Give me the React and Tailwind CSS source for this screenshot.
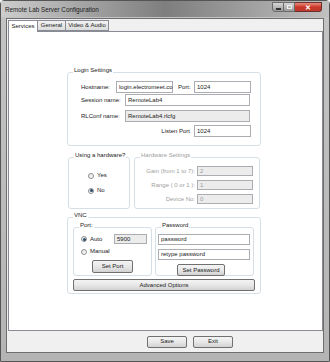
import React from 'react';

const FONT = { fontFamily: '"Liberation Sans", Arial, sans-serif' };

function Input({ value, w, gray, disabled, h = 'h-[11px]' }) {
    return (
        <div className={`${w} ${h} border border-[#abadb3] ${gray ? 'bg-[#ececec]' : 'bg-white'} flex items-center pl-[2px] ${disabled ? 'text-[#9a9a9a]' : 'text-[#1a1a1a]'}`}>
            {value}
        </div>
    );
}

function Button({ children, w, h = 'h-[12px]', className = '' }) {
    return (
        <div className={`${w} ${h} ${className} rounded-[2px] border border-[#707070] bg-gradient-to-b from-[#f4f4f4] via-[#e8e8e8] to-[#d2d2d2] flex items-center justify-center text-[#1a1a1a]`}>
            {children}
        </div>
    );
}

function Radio({ checked, label, disabled }) {
    return (
        <div className="flex items-center gap-[3px]">
            <div className="w-[6px] h-[6px] rounded-full border border-[#8e8f8f] bg-gradient-to-br from-[#e4e4e4] to-[#ffffff] flex items-center justify-center">
                {checked && <div className="w-[3px] h-[3px] rounded-full bg-[#2a4a6a]" />}
            </div>
            <span className={disabled ? 'text-[#9a9a9a]' : 'text-[#1a1a1a]'}>{label}</span>
        </div>
    );
}

function Group({ title, className = '', disabled, children }) {
    return (
        <fieldset className={`border border-[#d5dfe5] rounded-[3px] ${className}`}>
            <legend className={`ml-[5px] px-[1px] leading-[7px] pb-[3px] ${disabled ? 'text-[#a0a0a0]' : 'text-[#1a1a1a]'}`}>{title}</legend>
            {children}
        </fieldset>
    );
}

export default function App() {
    return (
        <div className="w-[330px] h-[362px] text-[6px] flex flex-col bg-gradient-to-b from-[#c4c4c4] to-[#b4b4b4] border border-[#555] rounded-t-[4px]" style={FONT}>
            {/* title bar */}
            <div className="h-[16px] flex items-start pl-[4px] pr-[7px] bg-gradient-to-r from-[#cdcdcd] via-[#7e7e7e] to-[#c0c0c0]">
                <span className="mt-[5px] text-[6.3px] text-[#1a1a1a] leading-[7px]">Remote Lab Server Configuration</span>
                <div className="flex-1" />
                <div className="flex mt-[1px]">
                    <div className="w-[12px] h-[10px] border border-[#6a6a6a] rounded-bl-[3px] bg-gradient-to-b from-[#d8d8d8] to-[#9a9a9a] flex items-center justify-center">
                        <div className="w-[5px] h-[2px] bg-white border-[0.5px] border-[#333] mt-[3px]" />
                    </div>
                    <div className="w-[11px] h-[10px] border border-l-0 border-[#6a6a6a] bg-gradient-to-b from-[#d8d8d8] to-[#9a9a9a] flex items-center justify-center">
                        <div className="w-[5px] h-[4px] border border-[#eee]" />
                    </div>
                    <div className="w-[27px] h-[10px] border border-l-0 border-[#6a3030] rounded-br-[3px] bg-gradient-to-b from-[#e88a7a] via-[#c9362a] to-[#c0392b] flex items-center justify-center text-white font-bold text-[7px] leading-none">
                        ✕
                    </div>
                </div>
            </div>

            {/* client area */}
            <div className="flex-1 mx-[5px] mb-[8px] mt-[1px] bg-[#f0f0f0] border border-[#6e6e6e] flex flex-col">
                {/* tabs */}
                <div className="h-[12px] flex items-end pl-[1px]">
                    <div className="h-[12px] w-[30px] bg-white border border-b-0 border-[#898c95] flex items-center justify-center text-[#1a1a1a] relative z-10 -mb-[1px]">Services</div>
                    <div className="h-[11px] w-[28px] border border-l-0 border-[#898c95] bg-gradient-to-b from-[#f2f2f2] to-[#dcdcdc] flex items-center justify-center text-[#1a1a1a]">General</div>
                    <div className="h-[11px] w-[43px] border border-l-0 border-[#898c95] bg-gradient-to-b from-[#f2f2f2] to-[#dcdcdc] flex items-center justify-center text-[#1a1a1a]">Video &amp; Audio</div>
                </div>

                {/* tab panel */}
                <div className="flex-1 bg-white border border-[#898c95] ml-[1px]">
                    <div className="ml-[58px] w-[194px] pt-[35px]">
                        <Group title="Login Settings" className="pb-[8px]">
                            <div className="pt-[4px] pl-[13px]">
                                <div className="flex items-center">
                                    <span className="w-[35px] text-[#1a1a1a]">Hostname:</span>
                                    <Input w="w-[57px]" h="h-[12px]" value="login.electromeet.co" />
                                    <span className="w-[16px] ml-[5px] text-[#1a1a1a]">Port:</span>
                                    <Input w="w-[57px]" h="h-[12px]" value="1024" />
                                </div>
                                <div className="flex items-center mt-[1px]">
                                    <span className="w-[44px] text-[#1a1a1a]">Session name:</span>
                                    <Input w="w-[125px]" h="h-[12px]" value="RemoteLab4" />
                                </div>
                                <div className="flex items-center mt-[4px]">
                                    <span className="w-[44px] text-[#1a1a1a]">RLConf name:</span>
                                    <Input w="w-[125px]" h="h-[12px]" gray value="RemoteLab4.rlcfg" />
                                </div>
                                <div className="flex items-center justify-end mt-[3px] pr-[9px]">
                                    <span className="mr-[4px] text-[#1a1a1a]">Listen Port</span>
                                    <Input w="w-[57px]" h="h-[12px]" value="1024" />
                                </div>
                            </div>
                        </Group>

                        <div className="flex gap-[4px] mt-[6px] ml-[1px]">
                            <Group title="Using a hardware?" className="w-[62px] h-[57px]">
                                <div className="pl-[19px] pt-[9px] flex flex-col gap-[6px]">
                                    <Radio label="Yes" />
                                    <Radio label="No" checked />
                                </div>
                            </Group>
                            <Group title="Hardware Settings" disabled className="w-[126px] h-[57px]">
                                <div className="pt-[4px] pr-[6px] flex flex-col gap-[4px]">
                                    {[['Gain (from 1 to 7):', '2'], ['Range ( 0 or 1 ):', '1'], ['Device No:', '0']].map(([l, v]) => (
                                        <div key={l} className="flex items-center justify-end">
                                            <span className="mr-[2px] text-[#a0a0a0]">{l}</span>
                                            <Input w="w-[56px]" h="h-[10px]" gray disabled value={v} />
                                        </div>
                                    ))}
                                </div>
                            </Group>
                        </div>

                        <Group title="VNC" className="mt-[3px] pb-[2px]">
                            <div className="flex gap-[3px] pl-[5px]">
                                <Group title="Port:" className="w-[79px] h-[54px]">
                                    <div className="pl-[7px] pt-[2px]">
                                        <div className="flex items-center">
                                            <div className="w-[33px]"><Radio label="Auto" checked /></div>
                                            <Input w="w-[33px]" h="h-[10px]" gray value="5900" />
                                        </div>
                                        <div className="mt-[3px]"><Radio label="Manual" /></div>
                                    </div>
                                    <Button w="w-[41px]" h="h-[13px]" className="mx-auto mt-[4px]">Set Port</Button>
                                </Group>
                                <Group title="Password" className="w-[99px] h-[54px]">
                                    <div className="pl-[2px] pt-[2px] flex flex-col gap-[4px]">
                                        <Input w="w-[92px]" h="h-[11px]" value="password" />
                                        <Input w="w-[92px]" h="h-[11px]" value="retype password" />
                                    </div>
                                    <Button w="w-[48px]" h="h-[12px]" className="ml-[21px] mt-[4px]">Set Password</Button>
                                </Group>
                            </div>
                            <Button w="w-[182px]" h="h-[12px]" className="ml-[5px] mt-[3px]">Advanced Options</Button>
                        </Group>
                    </div>
                </div>

                {/* bottom buttons */}
                <div className="h-[21px] flex items-center pl-[140px] gap-[6px]">
                    <Button w="w-[40px]" h="h-[12px]">Save</Button>
                    <Button w="w-[40px]" h="h-[12px]">Exit</Button>
                </div>
            </div>
        </div>
    );
}
